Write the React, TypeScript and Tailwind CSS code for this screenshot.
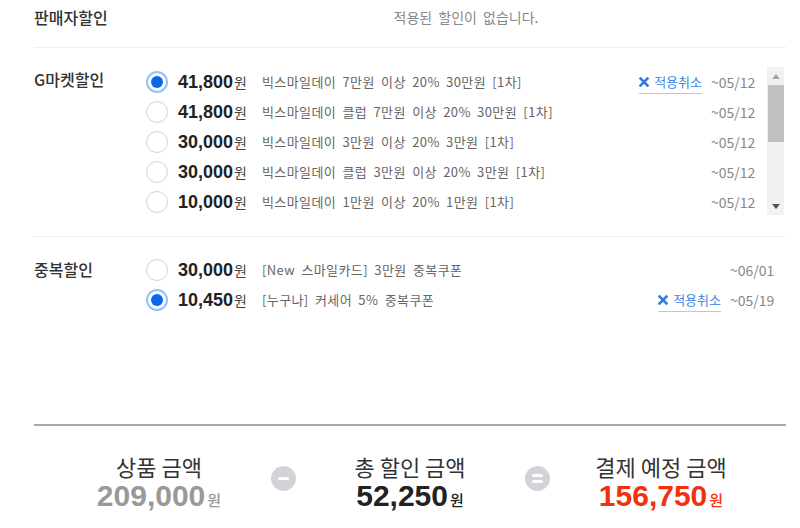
import * as React from "react"

const kr = "font-['Noto_Sans_CJK_KR','Noto_Sans',sans-serif]"
const num = "font-['Liberation_Sans','Arial',sans-serif]"

type Coupon = {
  amount: string
  title: string
  until: string
  on?: boolean
}

const gmarket: Coupon[] = [
  { amount: "41,800", title: "빅스마일데이 7만원 이상 20% 30만원 [1차]", until: "~05/12", on: true },
  { amount: "41,800", title: "빅스마일데이 클럽 7만원 이상 20% 30만원 [1차]", until: "~05/12" },
  { amount: "30,000", title: "빅스마일데이 3만원 이상 20% 3만원 [1차]", until: "~05/12" },
  { amount: "30,000", title: "빅스마일데이 클럽 3만원 이상 20% 3만원 [1차]", until: "~05/12" },
  { amount: "10,000", title: "빅스마일데이 1만원 이상 20% 1만원 [1차]", until: "~05/12" },
]

const extra: Coupon[] = [
  { amount: "30,000", title: "[New 스마일카드] 3만원 중복쿠폰", until: "~06/01" },
  { amount: "10,450", title: "[누구나] 커세어 5% 중복쿠폰", until: "~05/19", on: true },
]

function Radio({ on }: { on?: boolean }) {
  if (on) {
    return (
      <span className="flex h-[22px] w-[22px] shrink-0 items-center justify-center rounded-full border-2 border-[#92c1ff] bg-white">
        <span className="h-[12px] w-[12px] rounded-full bg-[#0a66f0]" />
      </span>
    )
  }
  return <span className="h-[22px] w-[22px] shrink-0 rounded-full border-[1.5px] border-[#d4d4d4] bg-white" />
}

function Row({ c }: { c: Coupon }) {
  return (
    <div className="flex h-[30px] items-center">
      <Radio on={c.on} />
      <div className="ml-[10px] flex w-[84px] shrink-0 items-baseline">
        <span className={`${num} text-[18px] font-bold text-[#222]`}>{c.amount}</span>
        <span className={`${kr} ml-[1px] text-[14px] text-[#444]`}>원</span>
      </div>
      <div className={`${kr} flex-1 text-[13px] tracking-[0.4px] text-[#666] [word-spacing:3px]`}>{c.title}</div>
      {c.on && (
        <span className={`${kr} mr-[9px] flex items-center gap-[5px] border-b border-[#a9cbf5] pb-[3px] pt-[3px] text-[13px] leading-[16px] text-[#3a86e6]`}>
          <svg width="10" height="10" viewBox="0 0 10 10">
            <path d="M1.5 1.5 L8.5 8.5 M8.5 1.5 L1.5 8.5" stroke="#2f7de0" strokeWidth="2.6" strokeLinecap="square" />
          </svg>
          적용취소
        </span>
      )}
      <span className={`${kr} w-[46px] text-[14px] text-[#888]`}>{c.until}</span>
    </div>
  )
}

function Scrollbar() {
  return (
    <div className="flex w-[17px] shrink-0 flex-col items-center bg-[#f1f1f1]">
      <div className="flex h-[18px] w-full items-center justify-center">
        <svg width="8" height="5" viewBox="0 0 8 5"><path d="M0 5 L4 0 L8 5 Z" fill="#a3a3a3" /></svg>
      </div>
      <div className="h-[57px] w-[16px] bg-[#c1c1c1]" />
      <div className="flex-1" />
      <div className="flex h-[18px] w-full items-center justify-center">
        <svg width="8" height="5" viewBox="0 0 8 5"><path d="M0 0 L8 0 L4 5 Z" fill="#505050" /></svg>
      </div>
    </div>
  )
}

function Op({ kind }: { kind: "minus" | "eq" }) {
  return (
    <div className="flex w-[48px] shrink-0 justify-center pt-[12px]">
      <span className="flex h-[25px] w-[25px] flex-col items-center justify-center gap-[3px] rounded-full bg-[#d2d3d8]">
        {kind === "minus" ? (
          <span className="h-[3px] w-[11px] rounded-sm bg-white" />
        ) : (
          <>
            <span className="h-[3px] w-[11px] rounded-sm bg-white" />
            <span className="h-[3px] w-[11px] rounded-sm bg-white" />
          </>
        )}
      </span>
    </div>
  )
}

function Total({ label, value, color, w }: { label: string; value: string; color: string; w: string }) {
  return (
    <div className={`flex shrink-0 flex-col items-center ${w}`}>
      <div className={`${kr} text-[22px] leading-[24px] text-[#333]`}>{label}</div>
      <div className="mt-[2px] flex items-baseline leading-[32px]">
        <span className={`${num} text-[30px] font-bold ${color}`}>{value}</span>
        <span className={`${kr} ml-[2px] text-[15px] font-medium ${color}`}>원</span>
      </div>
    </div>
  )
}

export default function App() {
  return (
    <div className="h-[528px] w-[800px] overflow-hidden bg-white">
      <div className="ml-[34px] w-[752px]">
        {/* 판매자할인 */}
        <div className="flex border-b border-[#eeeeee] pb-[20px] pt-[7px]">
          <div className={`${kr} w-[112px] text-[16px] font-medium leading-[20px] text-[#333]`}>판매자할인</div>
          <div className={`${kr} flex-1 text-center text-[14px] leading-[20px] text-[#888] [word-spacing:3px]`}>적용된 할인이 없습니다.</div>
        </div>

        {/* G마켓할인 */}
        <div className="flex border-b border-[#eeeeee] pb-[21px] pt-[19px]">
          <div className={`${kr} mt-[2px] w-[112px] text-[16px] font-medium leading-[20px] text-[#333]`}>G마켓할인</div>
          <div className="flex h-[148px] flex-1">
            <div className="flex-1 overflow-hidden pr-[10px]">
              {gmarket.map((c, i) => (
                <Row key={i} c={c} />
              ))}
            </div>
            <Scrollbar />
            <div className="w-[2px]" />
          </div>
        </div>

        {/* 중복할인 */}
        <div className="flex pt-[18px]">
          <div className={`${kr} mt-[4px] w-[112px] text-[16px] font-medium leading-[20px] text-[#333]`}>중복할인</div>
          <div className="flex-1 pr-[10px]">
            {extra.map((c, i) => (
              <Row key={i} c={c} />
            ))}
          </div>
        </div>

        {/* 합계 */}
        <div className="mt-[109px] h-[2px] bg-[#a9a9a9]" />
        <div className="flex pl-[25px] pt-[28px]">
          <Total label="상품 금액" value="209,000" color="text-[#999]" w="w-[200px]" />
          <Op kind="minus" />
          <Total label="총 할인 금액" value="52,250" color="text-[#222]" w="w-[206px]" />
          <Op kind="eq" />
          <Total label="결제 예정 금액" value="156,750" color="text-[#f2300d]" w="w-[200px]" />
        </div>
      </div>
    </div>
  )
}
